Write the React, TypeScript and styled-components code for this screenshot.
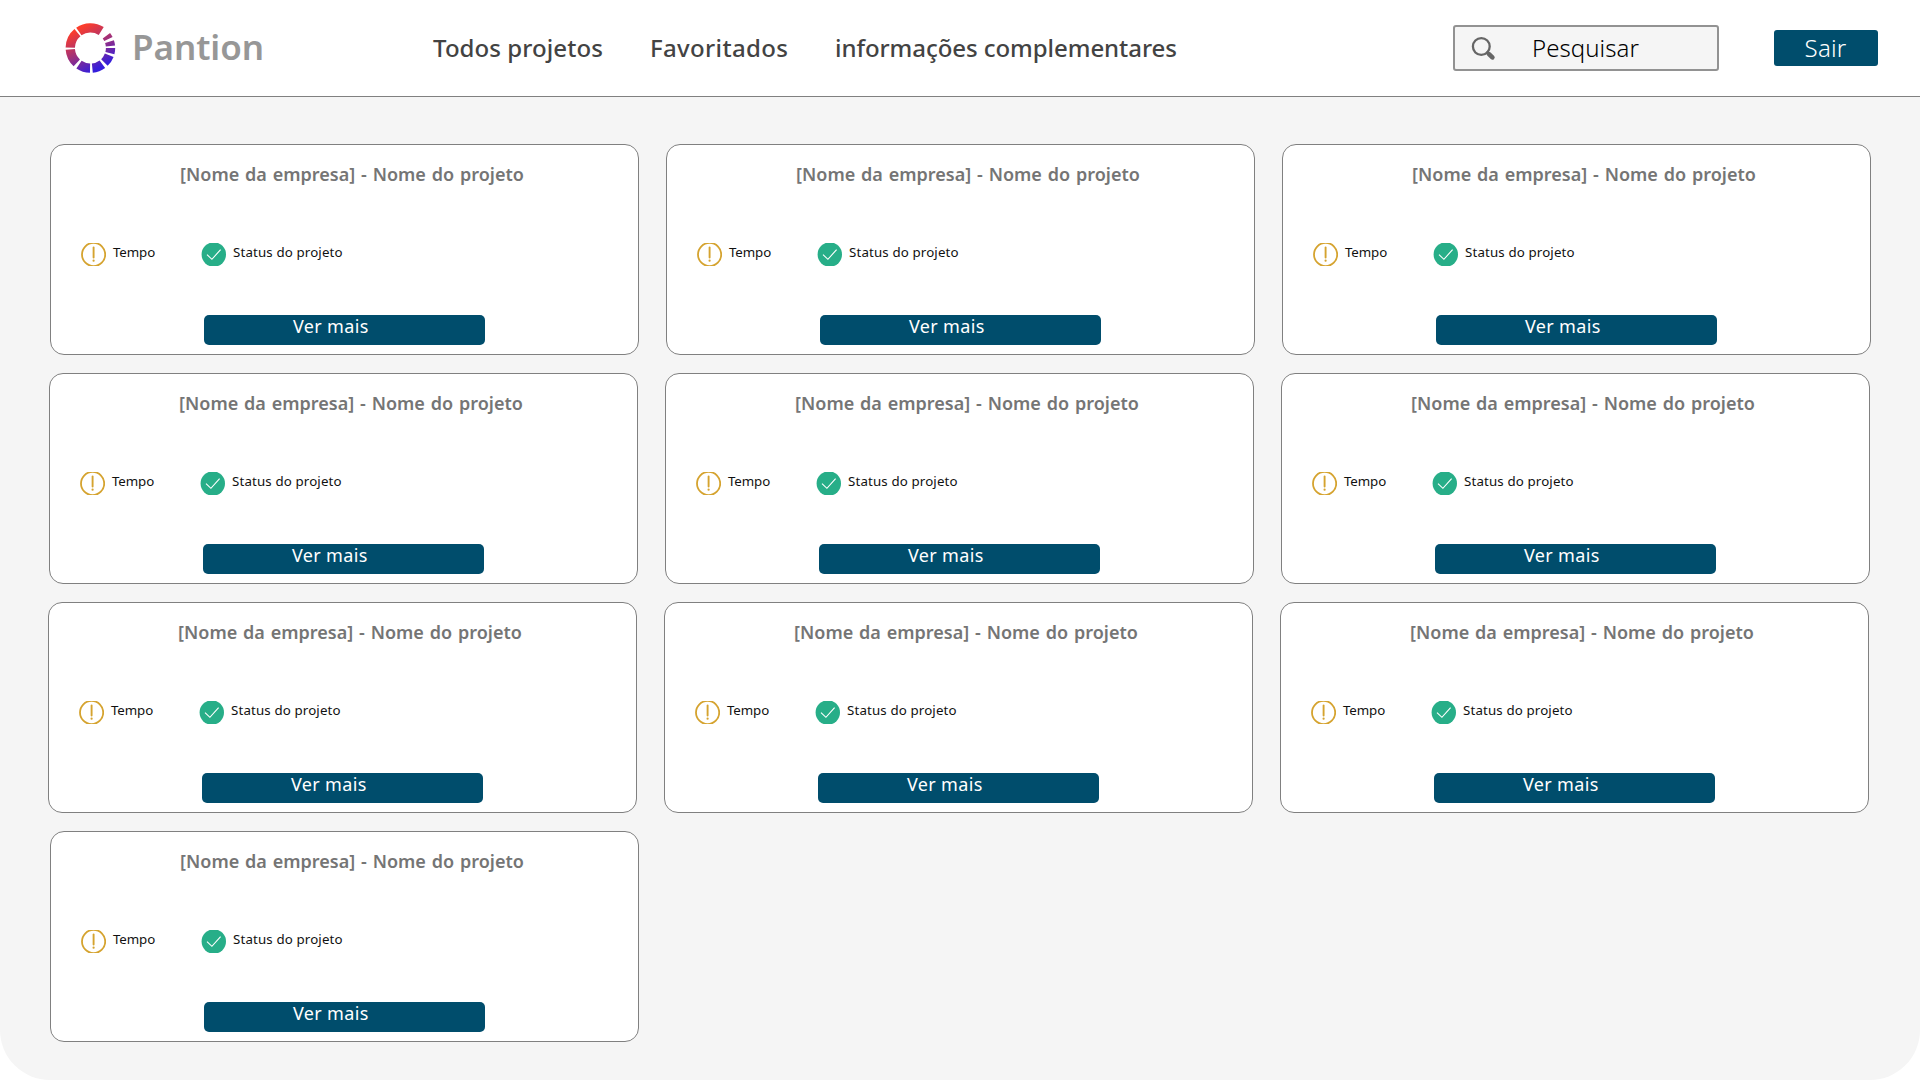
import React from 'react';
import styled, { createGlobalStyle } from 'styled-components';

const GlobalStyle = createGlobalStyle`
  *, *::before, *::after { box-sizing: border-box; }
  html, body { margin: 0; padding: 0; background: #fff; }
  body { font-family: "Noto Sans", "Open Sans", sans-serif; }
`;

const Page = styled.div`
  display: flex;
  flex-direction: column;
  width: 1920px;
  height: 1080px;
  overflow: hidden;
  background: #f5f5f5;
  border-radius: 0 0 50px 50px;
`;

const Header = styled.header`
  display: grid;
  grid-template-columns: 368px 1020px 266px 104px;
  align-items: center;
  height: 97px;
  padding-left: 65px;
  background: #fff;
  border-bottom: 1px solid #808080;
`;

const Brand = styled.div`
  display: flex;
  align-items: center;
  gap: 17px;
  height: 96px;
`;

const BrandName = styled.span`
  padding-bottom: 3px;
  color: #979797;
  font-size: 35px;
  font-weight: 600;
  line-height: 47px;
  letter-spacing: -0.05px;
`;

const Nav = styled.nav`
  display: grid;
  grid-template-columns: 217px 185px auto;
`;

const NavLink = styled.a<{ $tracking: number }>`
  color: #434343;
  font-size: 24px;
  font-weight: 500;
  line-height: 96px;
  white-space: nowrap;
  letter-spacing: ${(p) => p.$tracking}px;
`;

const Search = styled.div`
  display: flex;
  align-items: center;
  height: 46px;
  padding-left: 14px;
  background: #f5f5f5;
  border: 2px solid #929292;
  border-radius: 3px;
`;

const SearchText = styled.span`
  margin-left: 35px;
  color: #000;
  font-size: 24px;
  font-weight: 300;
  line-height: 42px;
  letter-spacing: 0.05px;
`;

const LogoutButton = styled.button`
  height: 36px;
  margin-left: 55px;
  width: 104px;
  padding: 0 1px 0 0;
  color: #fff;
  background: #004d6c;
  border: 0;
  border-radius: 3px;
  font: 300 24px/36px "Noto Sans", sans-serif;
  letter-spacing: 0.2px;
`;

const Board = styled.main`
  display: flex;
  flex-direction: column;
  gap: 18px;
  padding-top: 47px;
`;

const BoardRow = styled.div<{ $left: number }>`
  display: flex;
  gap: 27px;
  padding-left: ${(p) => p.$left}px;
`;

const Card = styled.article`
  display: flex;
  flex-direction: column;
  width: 589px;
  height: 211px;
  padding-top: 11px;
  background: #fff;
  border: 1px solid #808080;
  border-radius: 14px;
`;

const CardTitle = styled.h2`
  margin: 0;
  padding-left: 15px;
  color: #757575;
  font-size: 18px;
  font-weight: 600;
  line-height: 36px;
  word-spacing: 1.2px;
  text-align: center;
`;

const CardMeta = styled.div`
  display: grid;
  grid-template-columns: 120px auto;
  margin-top: 51px;
  padding-left: 30px;
`;

const MetaItem = styled.div`
  display: flex;
  gap: 7px;
  height: 23px;
`;

const MetaLabel = styled.span<{ $tracking: number }>`
  color: #111;
  font-size: 13.3px;
  line-height: 19px;
  letter-spacing: ${(p) => p.$tracking}px;
`;

const MoreButton = styled.button`
  width: 281px;
  height: 30px;
  margin: 49px 0 0 153px;
  padding: 0 0 8px 89px;
  color: #fff;
  background: #004d6c;
  border: 0;
  border-radius: 5px;
  font: 400 18px/22px "Noto Sans", sans-serif;
  letter-spacing: 0.35px;
  text-align: left;
`;

const LOGO_SEGMENTS: [number, number][] = [
  [-35, 32.5], [-89, -40], [-137.5, -94], [-179, -145.5],
  [143.5, 174.5], [111, 136], [90, 104.5], [71.5, 84], [52.5, 63.5],
];

const segmentPath = ([from, to]: [number, number]) => {
  const point = (deg: number, r: number) => {
    const a = (deg * Math.PI) / 180;
    return `${(25.4 + r * Math.sin(a)).toFixed(2)} ${(25 - r * Math.cos(a)).toFixed(2)}`;
  };
  return `M${point(from, 24.8)}A24.8 24.8 0 0 1 ${point(to, 24.8)}L${point(to, 15.5)}A15.5 15.5 0 0 0 ${point(from, 15.5)}Z`;
};

const Logo = () => (
  <svg width="50" height="50" viewBox="0 0 50 50" overflow="visible">
    <defs>
      <linearGradient id="ring" gradientUnits="userSpaceOnUse" x1="15" y1="5" x2="36" y2="44">
        <stop offset="0" stopColor="#fb3d2c" />
        <stop offset="0.5" stopColor="#a0307a" />
        <stop offset="1" stopColor="#351edb" />
      </linearGradient>
    </defs>
    {LOGO_SEGMENTS.map((s) => (
      <path key={s[0]} d={segmentPath(s)} fill="url(#ring)" />
    ))}
  </svg>
);

const SearchIcon = () => (
  <svg width="28" height="28" viewBox="0 0 28 28" fill="none" stroke="#666" strokeLinecap="round">
    <circle cx="12.3" cy="12.5" r="8.4" strokeWidth="2.3" />
    <path d="M18.3 18.5L20 20.2" strokeWidth="2.8" />
    <path d="M20 20.2L23.4 23.4" strokeWidth="4.6" />
  </svg>
);

const AlertIcon = () => (
  <svg width="25" height="23" viewBox="0 0 25 23" fill="none" stroke="#d5a32f">
    <circle cx="12.6" cy="11.5" r="11.6" strokeWidth="1.8" />
    <path d="M12.6 4.5V14.5" strokeWidth="1.9" strokeLinecap="round" />
    <circle cx="12.6" cy="17.7" r="1.1" fill="#d5a32f" stroke="none" />
  </svg>
);

const CheckIcon = () => (
  <svg width="25" height="23" viewBox="0 0 25 23" fill="none" overflow="hidden">
    <circle cx="12.8" cy="11.5" r="12.2" fill="#27ae88" />
    <path d="M6 11.7L10.9 16.3L19.6 6.6" stroke="#fff" strokeWidth="1.1" />
  </svg>
);

const ProjectCard = () => (
  <Card>
    <CardTitle>[Nome da empresa] - Nome do projeto</CardTitle>
    <CardMeta>
      <MetaItem>
        <AlertIcon />
        <MetaLabel $tracking={-0.1}>Tempo</MetaLabel>
      </MetaItem>
      <MetaItem>
        <CheckIcon />
        <MetaLabel $tracking={0.14}>Status do projeto</MetaLabel>
      </MetaItem>
    </CardMeta>
    <MoreButton>Ver mais</MoreButton>
  </Card>
);

const ROWS = [
  { left: 50, count: 3 },
  { left: 49, count: 3 },
  { left: 48, count: 3 },
  { left: 50, count: 1 },
];

export default function App() {
  return (
    <>
      <GlobalStyle />
      <Page>
        <Header>
          <Brand>
            <Logo />
            <BrandName>Pantion</BrandName>
          </Brand>
          <Nav>
            <NavLink $tracking={0.07}>Todos projetos</NavLink>
            <NavLink $tracking={0.35}>Favoritados</NavLink>
            <NavLink $tracking={-0.06}>informações complementares</NavLink>
          </Nav>
          <Search>
            <SearchIcon />
            <SearchText>Pesquisar</SearchText>
          </Search>
          <LogoutButton>Sair</LogoutButton>
        </Header>
        <Board>
          {ROWS.map((row, i) => (
            <BoardRow key={i} $left={row.left}>
              {Array.from({ length: row.count }, (_, n) => (
                <ProjectCard key={n} />
              ))}
            </BoardRow>
          ))}
        </Board>
      </Page>
    </>
  );
}
